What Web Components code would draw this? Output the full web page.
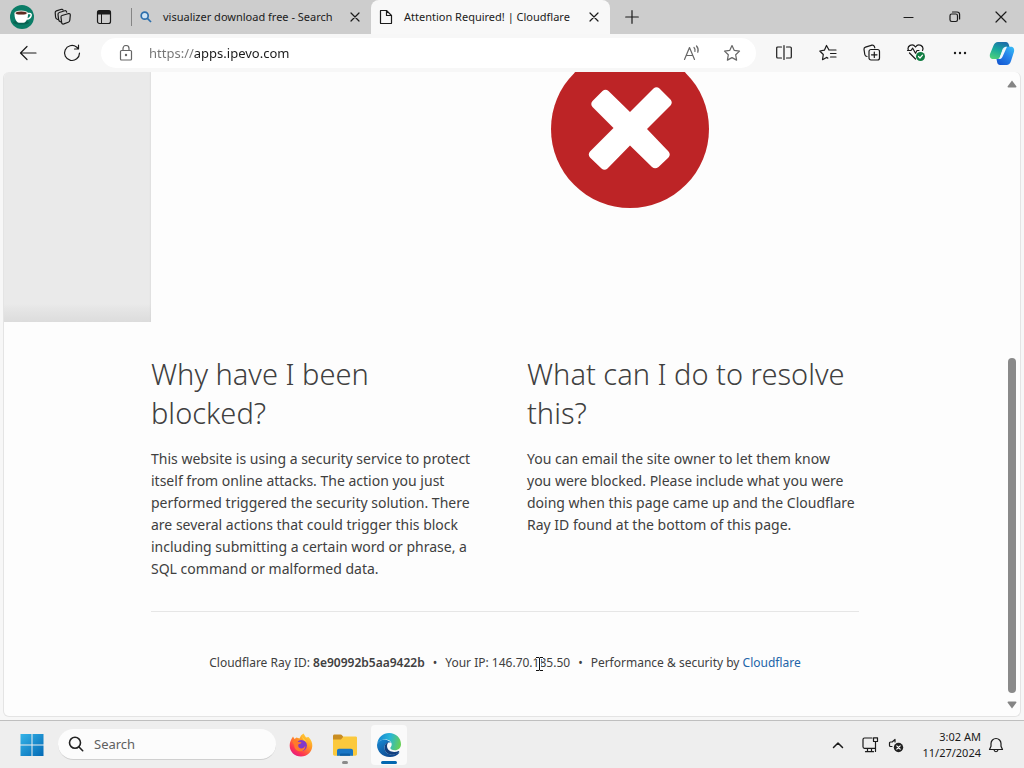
<!DOCTYPE html>
<html lang="en">
<head>
<meta charset="utf-8">
<meta name="viewport" content="width=device-width, initial-scale=1">
<title>Attention Required! | Cloudflare</title>
<style>
html, body { margin: 0; height: 100%; }
body { font-family: "Noto Sans", "Open Sans", sans-serif; color: #1b1b1b; overflow: hidden; }
</style>
</head>
<body>
<desk-top></desk-top>
<script>
const RESET = `*{box-sizing:border-box} button,input{font:inherit;color:inherit;margin:0;padding:0;border:0;background:none;outline:0} svg{display:block}`;

function define(tag, css, html) {
  const template = document.createElement('template');
  template.innerHTML = `<style>${RESET}${css}</style>${html}`;
  customElements.define(tag, class extends HTMLElement {
    constructor() {
      super();
      this.attachShadow({ mode: 'open' }).append(template.content.cloneNode(true));
    }
  });
}

const line = (size, body, extra = '') =>
  `<svg width="${size}" height="${size}" viewBox="0 0 ${size} ${size}" fill="none" stroke="currentColor" stroke-width="1.2" stroke-linecap="round" stroke-linejoin="round" ${extra}>${body}</svg>`;

const ICONS = {
  avatar: `<svg width="24" height="24" viewBox="0 0 24 24"><circle cx="12" cy="12" r="12" fill="#0b7d67"/><ellipse cx="11" cy="17.5" rx="8" ry="2" fill="#086352"/><path d="M17.500 8.500h2c1.700 0 2 1.200 1.500 2.500-.6 1.800-2 2.900-4 3" fill="none" stroke="#fff" stroke-width="1.500"/><path d="M4.500 8c-.2 5 1.500 9.300 4.500 9.800h4.500c3-.5 4.800-4.800 4.500-9.800z" fill="#fff"/><ellipse cx="11.200" cy="7.800" rx="6.700" ry="2.300" fill="#e9e2dd"/><ellipse cx="11.200" cy="8" rx="5.500" ry="1.600" fill="#5c2a20"/></svg>`,
  workspaces: line(18, `<path d="M8 7.500l6-1.800c1.500-.4 2.400.2 2.300 1.600l-.5 5c-.1 1-.6 1.600-1.500 1.900l-4.500 1.700c-1.300.4-2.200-.2-2.200-1.600L7 9c0-.8.300-1.300 1-1.500z"/><path d="M6.700 13.800c-1.400-.3-2-.9-2.100-2.200L4 6.500c-.1-1.100.3-1.700 1.300-2l5.500-1.700c1-.3 1.700.2 1.900 1.400"/><path d="M3.700 11.500C2.300 11.200 1.700 10.500 1.600 9.300L1.200 4.800c-.1-1 .3-1.600 1.200-1.900L7.500 1.300c.8-.2 1.300 0 1.600.8"/>`),
  panel: line(16, `<rect x="1.500" y="1.500" width="13" height="13" rx="2"/><path d="M5.500 5v9.500" stroke-width="1"/><path d="M2 2h12v3H2z" fill="currentColor"/>`),
  find: `<svg width="12" height="12" viewBox="0 0 12 12" fill="none" stroke="#2d6fac" stroke-width="1.700"><circle cx="4.700" cy="4.700" r="3.500" fill="#cfe4f5"/><path d="M7.400 7.400l3.600 3.600"/></svg>`,
  close: line(10, `<path d="M1 1l8 8M9 1L1 9"/>`),
  doc: line(14, `<path d="M1.500 1c0-.3.200-.5.500-.5h5.500l5 5V13c0 .3-.2.500-.5.500H2c-.3 0-.5-.2-.5-.5zM7.500.5v5h5"/>`),
  plus: line(14, `<path d="M7 .7v12.600M.7 7h12.600"/>`),
  minimize: line(12, `<path d="M1 6.500h9"/>`),
  restore: line(12, `<rect x="1" y="3" width="7.500" height="7.500" rx="1.700"/><path d="M3.500 1h4.500c1.500 0 2.600 1.100 2.600 2.600v4.400"/>`),
  winclose: line(12, `<path d="M1 1l10 10M11 1L1 11"/>`),
  back: line(18, `<path d="M17 9H1.500M8 2.500L1.500 9 8 15.500"/>`),
  reload: line(18, `<path d="M16.500 9A7.500 7.500 0 1 1 13.500 3l1.800 1.500M15.500 1v4h-4"/>`),
  lock: line(16, `<rect x="2.500" y="5.500" width="11" height="9.500" rx="1"/><path d="M5 5.500V3.500a3 3 0 0 1 6 0v2"/><circle cx="8" cy="10" r=".6" fill="currentColor"/>`),
  aloud: line(18, `<path d="M1.500 15.500L6.500 3.500l5 12M3.300 11.500h6.400M11 3.500c1 1 1.300 2.300.9 4M13.500 2c1.600 1.800 2.100 4 1.300 6.300"/>`),
  star: line(18, `<path d="M9 1.500l2.300 4.900 5.200.7-3.800 3.700.9 5.300L9 13.600l-4.600 2.500.9-5.300L1.500 7.100l5.200-.7z"/>`),
  split: line(18, `<path d="M6.500 3H2.700C2.100 3 1.700 3.400 1.700 4v9c0 .6.400 1 1 1h3.800M11.500 3h3.800c.6 0 1 .4 1 1v9c0 .6-.4 1-1 1h-3.800M9 1.500v14"/>`),
  favorites: line(18, `<path d="M10 6L7.500 1.500 5.400 6.200.8 7l3.500 3.500-.8 5.200 4-2.300 1.300.7M10 6h7M11.500 9.500H17M11.500 13H17"/>`),
  collections: line(18, `<rect x="6" y="5.500" width="10.500" height="10.500" rx="2"/><path d="M11.300 8v5.500M8.500 10.800H14M4 12.500c-1.400-.2-2-.9-2.200-2L1 5.300c-.1-1.100.4-1.800 1.500-2.200l6.500-1.900c1.300-.2 2 .3 2.500 1.600l.3 1"/>`),
  essentials: line(20, `<path d="M2.500 7.500C.5 3 6.500-.5 9.500 4c3-4.500 9-1 7 3.500M1.500 7.500h3.500l1.700-2.300 2.800 5 1.500-2.700h2M3.500 10l6 6"/><circle cx="14.500" cy="13.500" r="4.500" fill="#107c41" stroke="none"/><path d="M12.500 13.500l1.500 1.500 2.500-2.800" stroke="#fff"/>`),
  more: `<svg width="16" height="16" viewBox="0 0 16 16" fill="currentColor"><circle cx="3" cy="8" r="1.200"/><circle cx="8" cy="8" r="1.200"/><circle cx="13" cy="8" r="1.200"/></svg>`,
  copilot: `<svg width="26" height="26" viewBox="0 0 26 26"><defs><linearGradient id="a" x1=".6" y1="0" x2=".2" y2="1"><stop offset="0" stop-color="#1d6fa8"/><stop offset=".45" stop-color="#17a79e"/><stop offset="1" stop-color="#4fd07a"/></linearGradient><linearGradient id="b" x1="0" y1="1" x2=".8" y2="0"><stop offset="0" stop-color="#1252ce"/><stop offset=".6" stop-color="#2582ea"/><stop offset="1" stop-color="#34b5f4"/></linearGradient></defs><path d="M9 2h8c1.500 0 2.300 1 2.800 2.500L20.500 7H17c-2 0-3 .8-3.600 2.800L11 17c-.5 1.400-1.400 2-2.800 2H4.500C1.500 19 .3 17 1 14L4.500 5.500C5.500 3.200 6.800 2 9 2z" fill="url(#a)"/><path d="M17.500 25H11c-1.500 0-2.500-1-2.800-2.500L7.500 19c2.800.2 4.200-.8 4.800-2.800L14.500 9c.5-1.400 1.400-2.300 3-2.300h4c3 0 4.200 2 3.500 5l-3 9.300C21.200 23.800 19.700 25 17.500 25z" fill="url(#b)"/><path d="M14.500 8.500c.8-1.500 2-1.800 3.500-1.800l-4.500 10c-.7 1.600-1.700 2.300-3.500 2.300z" fill="#eef8fb"/></svg>`,
  windows: `<svg width="24" height="24" viewBox="0 0 24 24"><defs><linearGradient id="w" x1="0" y1="0" x2="1" y2="1"><stop stop-color="#35b4e8"/><stop offset="1" stop-color="#0369b5"/></linearGradient></defs><path d="M.5 1h11v10.500H.5zM12.500 1h11v10.500h-11zM.5 12.500h11V23H.5zM12.500 12.500h11V23h-11z" fill="url(#w)"/></svg>`,
  search: `<svg width="16" height="16" viewBox="0 0 16 16" fill="none" stroke="#222" stroke-width="1.600" stroke-linecap="round"><circle cx="7" cy="6.800" r="5.500"/><path d="M11 11l3.700 3.700"/></svg>`,
  firefox: `<svg width="24" height="24" viewBox="0 0 24 24"><defs><linearGradient id="f" x1=".9" y1="0" x2=".2" y2="1"><stop offset="0" stop-color="#ffe43d"/><stop offset=".4" stop-color="#ff9825"/><stop offset=".75" stop-color="#ff394f"/><stop offset="1" stop-color="#e31587"/></linearGradient></defs><path d="M2.500 6L4 3.500 5.500 6l2-1.500 3 1 1.500-3L14.500.5l2.500 4 2.500-.5C22 6.500 23.500 9.500 23.300 13c-.4 6-5 10.500-11.300 10.500S.7 19 .7 12.800C.7 10 1.500 7.800 2.500 6z" fill="url(#f)"/><circle cx="12.300" cy="12.500" r="5.600" fill="#8038c9"/><path d="M3 8c3-1.700 5-1 6.500 1l3 .3c-.5 1.500-2 1.700-3.200 2.200-.5 2 .7 3.800 2.700 4 2 .2 3.500-1 4.300-3 .2 3-1.500 5.500-4.300 5.800-4 .5-7-2.500-6.800-6z" fill="#ff7a2b"/><path d="M13 3c1 2.500 5 4 5 8.500 0-2-1-3-2-3.500-1.500-1-3-2.300-3-5z" fill="#ffd23e"/></svg>`,
  folder: `<svg width="26" height="24" viewBox="0 0 26 24"><path d="M1 3c0-.9.600-1.500 1.500-1.500h6c.8 0 1.200.4 1.700 1L11.500 4H23c1.200 0 2 .8 2 2v4H1z" fill="#c98d22"/><path d="M1 6.500h8L11.500 3.500H23.500C24.500 3.500 25 4.200 25 5V21c0 1-.7 1.700-1.700 1.700H2.700C1.700 22.700 1 22 1 21z" fill="#fbc93d"/><path d="M5 22.700V18c0-1.300.8-2.200 2-2.200h12c1.200 0 2 .9 2 2.200v4.700z" fill="#1976c5"/><path d="M8 22.700v-1.300c0-.6.400-1 1-1h8c.6 0 1 .4 1 1v1.300z" fill="#0c5ea6"/></svg>`,
  edge: `<svg width="26" height="26" viewBox="0 0 26 26"><defs><linearGradient id="e1" x1="0" y1=".3" x2="1" y2=".5"><stop stop-color="#1685d0"/><stop offset=".5" stop-color="#28b5d8"/><stop offset="1" stop-color="#66cf55"/></linearGradient><linearGradient id="e2" x1="0" y1="0" x2=".7" y2="1"><stop stop-color="#1989d3"/><stop offset="1" stop-color="#0d458c"/></linearGradient></defs><path d="M1.300 11.500C2 5.500 7 1 13.200 1 20 1 25 6 25 12.200c0 3.700-2.800 6-6.200 6-3 0-4.500-1-4.500-2.200 0-.9 1.400-1.300 1.400-3.500 0-2.800-2.500-5-6.200-5-3.700 0-6.500 1.500-8.200 4z" fill="url(#e1)"/><path d="M1.300 11.500C2.500 9 5.500 7.500 9 7.800c2.500.2 4.800 1.200 6 3C11.500 9.500 8.500 12 8.500 15.500c0 4.500 4 7.500 8.500 7 2.300-.2 4-1.200 5.600-2.200.5-.3.900.2.600.6C21 23.500 17.500 25.200 13.500 25 6.500 25 1 19.500 1 13z" fill="url(#e2)"/><path d="M8.500 15.500c0-3 1.800-5 4-5.300-2.300 2.300-1.800 6.500.8 8.300 3 2 6.700 1.500 9.300.5.500-.2.900.2.600.6-2 2.600-5 3.400-7.500 3.100-4.500-.5-7.200-3.400-7.200-7.200z" fill="#123f7e"/></svg>`,
  chevron: line(12, `<path d="M1.500 8.500L6 4l4.500 4.500"/>`, `style="stroke-width:1.500"`),
  network: line(18, `<path d="M11 2H3.500C2.500 2 2 2.500 2 3.500v7.300c0 1 .5 1.500 1.500 1.500H14M6.500 12.500V15.500M10.500 12.500v3M4.500 15.700h8"/><path d="M12.500 1.800h4v3.700h-4zM14.500 5.500v10"/>`),
  sound: line(16, `<path d="M7 2.500L4.200 5H2.500C1.800 5 1.500 5.500 1.500 6v2.500c0 .6.400 1 1 1H4M7 2.500V5"/><circle cx="10.500" cy="10.500" r="4.700" fill="#222" stroke="none"/><path d="M8.800 8.800l3.400 3.400M12.200 8.800l-3.400 3.400" stroke="#fff"/>`),
  bell: line(16, `<path d="M1.500 12.500h13L13 9.300V6.500a5 5 0 0 0-10 0v2.800zM6 12.800c.3 2.600 3.700 2.600 4 0"/>`),
  blocked: `<svg width="160" height="160" viewBox="0 0 160 160"><circle cx="80" cy="80" r="79" fill="#bd2426"/><path d="M80 63L103.500 39.500q3-2.500 6 0L120.500 50.500q2.500 3 0 6L97 80l21.500 22.500q2.500 3 0 6L108.500 118q-3.500 2.500-6.500 0L80 96.500 57.500 119.500q-3 2.500-6 0L40 108.500q-2.500-3 0-6L63.500 79 42.500 58q-2.500-3 0-6L52.500 42q3-2.500 6 0z" fill="#fff"/></svg>`,
};

customElements.define('ui-icon', class extends HTMLElement {
  connectedCallback() {
    if (this.shadowRoot) return;
    this.attachShadow({ mode: 'open' }).innerHTML =
      `<style>:host{display:inline-flex;flex:none}svg{display:block}</style>${ICONS[this.getAttribute('name')]}`;
  }
});

/* Icon button used in every bar; --w sets its width. */
customElements.define('icon-button', class extends HTMLElement {
  connectedCallback() {
    if (this.shadowRoot) return;
    this.attachShadow({ mode: 'open' }).innerHTML = `<style>${RESET}
      :host{display:flex;flex:none;width:var(--w,44px);align-self:stretch}
      button{flex:1;display:flex;align-items:center;justify-content:center}</style>
      <button type="button" aria-label="${this.getAttribute('label')}"><ui-icon name="${this.getAttribute('icon')}"></ui-icon></button>`;
  }
});

define('browser-tab', `
  :host{display:flex;flex:0 1 240px;min-width:0;align-items:center;padding-left:8px;--w:32px;font-size:11px}
  :host([selected]){background:#f8f8f8;border-radius:8px 8px 0 0}
  .title{flex:1;min-width:0;display:flex;align-items:center;gap:11px;text-align:left;white-space:nowrap;height:100%;line-height:18px}
  ::slotted(ui-icon){flex:none}`,
  `<button class="title" type="button" role="tab"><slot name="icon"></slot><slot></slot></button><icon-button label="Close tab" icon="close"></icon-button>`);

define('title-bar', `
  :host{display:flex;height:34px;background:#cdcdcd;flex:none}
  .tools{display:flex;--w:42px;padding-left:1px}
  .divider{width:1px;height:18px;background:#858585;align-self:center;margin-left:6px}
  .tabs{display:flex;flex:0 1 478px;min-width:0}
  .window{display:flex;margin-left:auto;--w:46px}`,
  `<div class="tools"><icon-button label="Profile" icon="avatar"></icon-button><icon-button style="--w:40px" label="Workspaces" icon="workspaces"></icon-button><icon-button label="Tab actions" icon="panel"></icon-button></div>
  <div class="divider"></div>
  <div class="tabs" role="tablist">
    <browser-tab><ui-icon slot="icon" name="find"></ui-icon>visualizer download free - Search</browser-tab>
    <browser-tab selected><ui-icon slot="icon" name="doc"></ui-icon>Attention Required! | Cloudflare</browser-tab>
  </div>
  <icon-button label="New tab" icon="plus"></icon-button>
  <div class="window"><icon-button label="Minimize" icon="minimize"></icon-button><icon-button label="Restore" icon="restore"></icon-button><icon-button label="Close" icon="winclose"></icon-button></div>`);

define('address-bar', `
  :host{display:flex;flex:1;min-width:0;height:30px;background:#fff;border-radius:15px;--w:40px;padding:0 4px 0 17px;align-items:center;gap:15px;font-size:13px;margin:0 6px 0 7px}
  ui-icon,icon-button{color:#666}
  input{flex:1;min-width:0;height:24px;color:transparent;background:linear-gradient(90deg,#747474 45px,#1b1b1b 45px);-webkit-background-clip:text;background-clip:text}
  .actions{display:flex;align-self:stretch}`,
  `<ui-icon name="lock"></ui-icon><input type="text" aria-label="Address" value="https://apps.ipevo.com" spellcheck="false"><div class="actions"><icon-button label="Read aloud" icon="aloud"></icon-button><icon-button label="Add to favorites" icon="star"></icon-button></div>`);

define('tool-bar', `
  :host{display:flex;align-items:center;height:38px;padding:0 2px 0 6px;background:#f7f7f7;flex:none}`,
  `<icon-button label="Back" icon="back"></icon-button><icon-button label="Refresh" icon="reload"></icon-button>
  <address-bar></address-bar>
  <icon-button label="Split screen" icon="split"></icon-button><icon-button label="Favorites" icon="favorites"></icon-button><icon-button label="Collections" icon="collections"></icon-button><icon-button label="Browser essentials" icon="essentials"></icon-button><icon-button label="Settings and more" icon="more"></icon-button><icon-button style="--w:40px" label="Copilot" icon="copilot"></icon-button>`);

define('scroll-bar', `
  :host{box-sizing:border-box;display:flex;flex-direction:column;align-items:center;flex:none;width:14px;padding:8px 2px 7px 0}
  .track{flex:1;width:8px;display:flex;flex-direction:column;padding:4px 0 8px}
  .space{flex:266 0 0}
  .thumb{flex:334 0 0;border-radius:4px;background:#8a8a8a}`,
  `<svg width="10" height="8" viewBox="0 0 10 8"><path d="M5 .5L9.500 6.500Q9.500 7.500 8.500 7.500h-7Q.5 7.500.5 6.500z" fill="#858585"/></svg>
  <div class="track"><div class="space"></div><div class="thumb"></div></div>
  <svg width="10" height="8" viewBox="0 0 10 8"><path d="M5 7.500L9.500 1.500Q9.500.5 8.500.5h-7Q.5.500.5 1.500z" fill="#858585"/></svg>`);

define('site-preview', `
  :host{display:grid;grid-template-columns:1fr minmax(0,708px) 1fr;height:250px;overflow:hidden;background:linear-gradient(#eaeaea 232px,#e6e6e6 236px,#dcdcdc)}
  .shot{grid-column:2 / 4;background:#fdfdfd;box-shadow:0 0 2px #ccc;overflow:hidden}
  .page{width:958px;display:flex;justify-content:center;margin-top:-23px}`,
  `<div class="shot"><div class="page"><ui-icon name="blocked" role="img" aria-label="Blocked"></ui-icon></div></div>`);

define('info-column', `
  :host{display:block;min-width:0}
  h2{margin:0 0 16px;font-size:29px;line-height:39px;font-weight:350}
  p{margin:0;padding-right:2px;font-size:14px;line-height:22px}`,
  `<h2><slot name="title"></slot></h2><p><slot></slot></p>`);

define('mouse-cursor', `
  :host{position:absolute;left:0;top:0}`,
  `<svg width="9" height="16" viewBox="0 0 9 16" fill="none"><path d="M1 1.500h3l.5.5.5-.5h3M4.500 2v12M1 14.500h3l.5-.5.5.5h3" stroke="#fff" stroke-width="3"/><path d="M1 1.500h3l.5.5.5-.5h3M4.500 2v12M1 14.500h3l.5-.5.5.5h3" stroke="#111"/></svg>`);

define('page-footer', `
  :host{display:block;border-top:1px solid #e6e6e6;padding-top:41px;font-size:12px;line-height:20px;text-align:center}
  .sep{margin:0 8px}
  .ip{position:relative}
  mouse-cursor{left:43px;top:2px}
  a{color:#2264a8;text-decoration:none}
  b{font-weight:600}`,
  `<span>Cloudflare Ray ID: <b>8e90992b5aa9422b</b></span><span class="sep">•</span><span>Your IP: <span class="ip">146.70.185.50<mouse-cursor></mouse-cursor></span></span><span class="sep">•</span><span>Performance &amp; security by <a href="#">Cloudflare</a></span>`);

define('block-page', `
  :host{display:block;flex:1;min-width:0;overflow:hidden;color:#404040}
  main{max-width:708px;margin:0 auto;padding-top:32px}
  .columns{display:grid;grid-template-columns:1fr 1fr;gap:44px;margin-bottom:31px}`,
  `<site-preview></site-preview>
  <main><div class="columns">
    <info-column><span slot="title">Why have I been blocked?</span>This website is using a security service to protect itself from online attacks. The action you just performed triggered the security solution. There are several actions that could trigger this block including submitting a certain word or phrase, a SQL command or malformed data.</info-column>
    <info-column><span slot="title">What can I do to resolve this?</span>You can email the site owner to let them know you were blocked. Please include what you were doing when this page came up and the Cloudflare Ray ID found at the bottom of this page.</info-column>
  </div><page-footer></page-footer></main>`);

define('browser-window', `
  :host{display:flex;flex-direction:column;flex:1;min-height:0;background:#f7f7f7}
  .view{flex:1;min-height:0;display:flex;margin:0 3px 3px;background:#fdfdfd;border-radius:6px;border:1px solid #e4e4e4;border-top:0;overflow:hidden}`,
  `<title-bar></title-bar><tool-bar></tool-bar><div class="view"><block-page></block-page><scroll-bar></scroll-bar></div>`);

define('task-bar', `
  :host{box-sizing:border-box;display:flex;align-items:center;flex:none;height:48px;background:#eee;border-top:1px solid #bfbfbf;padding:0 13px 0 10px}
  .search{display:flex;align-items:center;gap:10px;flex:0 1 218px;min-width:0;height:31px;margin:0 3px 0 4px;padding:0 10px;border-radius:16px;background:#fcfcfc;border-bottom:1px solid #d0d0d0;font-size:13px;color:#606060}
  input{min-width:0;width:0;flex:1}
  input::placeholder{color:#606060;opacity:1}
  .app{display:flex;position:relative;height:40px}
  .app.active{--w:36px;margin:0 4px;background:#fafafa;border-radius:4px}
  .app::after{content:"";position:absolute;bottom:1px;left:50%;width:6px;height:3px;margin-left:-3px;border-radius:2px;background:#8a8a8a}
  .app.active::after{width:16px;margin-left:-8px;background:#0067b0}
  .tray{display:flex;align-items:center;height:100%;margin-left:auto;--w:26px}
  time{font-size:11px;line-height:16px;text-align:right;margin-left:13px}`,
  `<icon-button label="Start" icon="windows"></icon-button>
  <label class="search"><ui-icon name="search"></ui-icon><input type="text" placeholder="Search" aria-label="Search"></label>
  <icon-button label="Firefox" icon="firefox"></icon-button>
  <div class="app"><icon-button label="File Explorer" icon="folder"></icon-button></div>
  <div class="app active"><icon-button label="Microsoft Edge" icon="edge"></icon-button></div>
  <div class="tray"><icon-button style="--w:38px" label="Show hidden icons" icon="chevron"></icon-button><icon-button label="Network" icon="network"></icon-button><icon-button label="Volume" icon="sound"></icon-button><time datetime="2024-11-27T03:02">3:02 AM<br>11/27/2024</time><icon-button style="--w:30px" label="Notifications" icon="bell"></icon-button></div>`);

define('desk-top', `:host{display:flex;flex-direction:column;height:100vh}`, `<browser-window></browser-window><task-bar></task-bar>`);
</script>
</body>
</html>
